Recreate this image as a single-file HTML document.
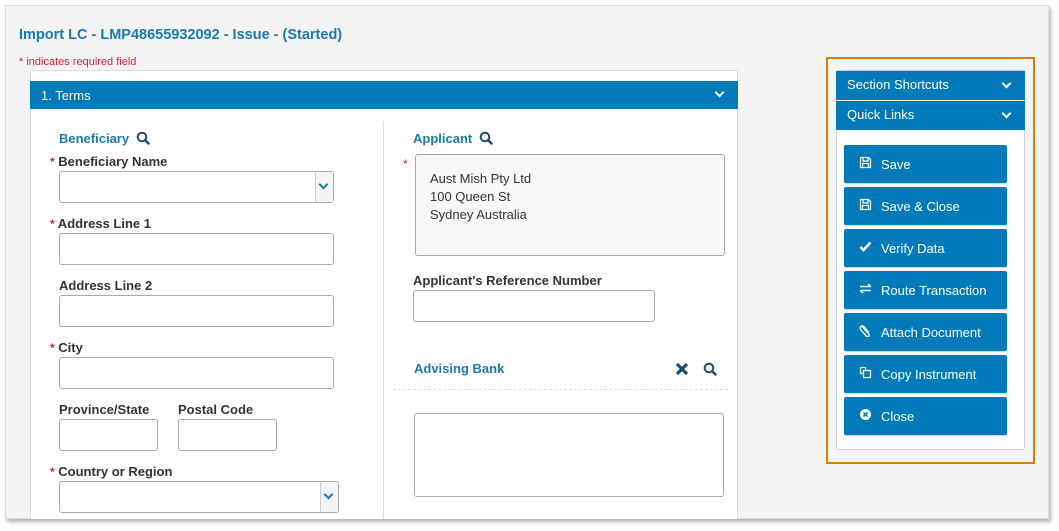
<!DOCTYPE html>
<html><head><style>
*{box-sizing:border-box;margin:0;padding:0}
body{width:1059px;height:531px;background:#fff;font-family:"Liberation Sans",sans-serif;position:relative;overflow:hidden;color:#333}
.a{position:absolute}
.page{left:5px;top:5px;width:1044px;height:514px;background:#f4f4f4;border:1px solid #ddd;box-shadow:2px 3px 4px rgba(0,0,0,.3)}
.title{left:19px;top:27px;font-size:14.5px;font-weight:bold;color:#1a7ab0}
.req{left:19px;top:56px;font-size:11px;color:#d0213a}
.form{left:30px;top:70px;width:708px;height:449px;background:#fff;border:1px solid #ddd;border-bottom:none}
.hdr{background:#007ab8;color:#fff;font-size:13px}
.lbl{font-size:13px;font-weight:bold;color:#333}
.blue{font-size:13px;color:#1a7ab0;font-weight:bold}
.in{border:1px solid #aaa;border-radius:3px;background:#fff}
.star{color:#d0213a;font-size:12px}
.sel::after{content:"";position:absolute;right:0;top:0;bottom:0;width:17px;border-left:1px solid #ccc;background:#f4f4f4}
.chev{position:absolute;width:7px;height:7px;border-right:2px solid;border-bottom:2px solid;transform:rotate(45deg)}
.btn{left:844px;width:163px;height:38px;background:#007ab8;color:#fff;font-size:13px;border-radius:2px;padding:12px 0 0 37px;box-shadow:0 1px 1px #ccc}
.ic{position:absolute;left:15px;top:11px;font-size:14px;line-height:14px}
.ic svg{display:block}
</style></head><body>
<div class="a page"></div>
<div class="a title">Import LC - LMP48655932092 - Issue - (Started)</div>
<div class="a req">* indicates required field</div>
<div class="a form"></div>
<div class="a hdr" style="left:30px;top:81px;width:708px;height:28px;padding:7px 0 0 11px">1. Terms<span class="chev" style="left:686px;top:8px;color:#fff"></span></div>
<div class="a" style="left:383px;top:121px;width:1px;height:398px;background:#ddd"></div>

<div class="a blue" style="left:59px;top:131px">Beneficiary</div>
<svg class="a" style="left:136px;top:131px" width="14" height="14" viewBox="0 0 14 14"><circle cx="6" cy="6" r="4.3" fill="none" stroke="#1d4e6e" stroke-width="2"/><path d="M9 9l3.5 3.5" stroke="#1d4e6e" stroke-width="2.4" stroke-linecap="round"/></svg>
<div class="a lbl" style="left:50px;top:154px"><span class="star">*</span> Beneficiary Name</div>
<div class="a in sel" style="left:59px;top:171px;width:275px;height:32px"></div><span class="chev" style="left:320px;top:181px;color:#1a7ab0;position:absolute;z-index:2"></span>
<div class="a lbl" style="left:50px;top:216px"><span class="star">*</span> Address Line 1</div>
<div class="a in" style="left:59px;top:233px;width:275px;height:32px"></div>
<div class="a lbl" style="left:59px;top:278px">Address Line 2</div>
<div class="a in" style="left:59px;top:295px;width:275px;height:32px"></div>
<div class="a lbl" style="left:50px;top:340px"><span class="star">*</span> City</div>
<div class="a in" style="left:59px;top:357px;width:275px;height:32px"></div>
<div class="a lbl" style="left:59px;top:402px">Province/State</div>
<div class="a lbl" style="left:178px;top:402px">Postal Code</div>
<div class="a in" style="left:59px;top:419px;width:99px;height:32px"></div>
<div class="a in" style="left:178px;top:419px;width:99px;height:32px"></div>
<div class="a lbl" style="left:50px;top:464px"><span class="star">*</span> Country or Region</div>
<div class="a in sel" style="left:59px;top:481px;width:280px;height:32px"></div><span class="chev" style="left:325px;top:491px;color:#1a7ab0;position:absolute;z-index:2"></span>

<div class="a blue" style="left:413px;top:131px">Applicant</div>
<svg class="a" style="left:479px;top:131px" width="14" height="14" viewBox="0 0 14 14"><circle cx="6" cy="6" r="4.3" fill="none" stroke="#1d4e6e" stroke-width="2"/><path d="M9 9l3.5 3.5" stroke="#1d4e6e" stroke-width="2.4" stroke-linecap="round"/></svg>
<div class="a star" style="left:403px;top:157px">*</div>
<div class="a in" style="left:415px;top:154px;width:310px;height:102px;background:#f8f8f8;font-size:13px;line-height:18px;padding:15px 14px;color:#333">Aust Mish Pty Ltd<br>100 Queen St<br>Sydney Australia</div>
<div class="a lbl" style="left:413px;top:273px">Applicant's Reference Number</div>
<div class="a in" style="left:413px;top:290px;width:242px;height:32px"></div>
<div class="a blue" style="left:414px;top:361px">Advising Bank</div>
<svg class="a" style="left:675px;top:362px" width="14" height="14" viewBox="0 0 14 14"><path d="M2 2l10 10M12 2L2 12" stroke="#1d4e6e" stroke-width="3.2"/></svg>
<svg class="a" style="left:703px;top:362px" width="14" height="14" viewBox="0 0 14 14"><circle cx="6" cy="6" r="4.3" fill="none" stroke="#1d4e6e" stroke-width="2"/><path d="M9 9l3.5 3.5" stroke="#1d4e6e" stroke-width="2.4" stroke-linecap="round"/></svg>
<div class="a" style="left:393px;top:389px;width:335px;border-top:1px dashed #ddd"></div>
<div class="a in" style="left:414px;top:413px;width:310px;height:84px"></div>

<div class="a" style="left:826px;top:57px;width:209px;height:407px;border:2px solid #e07b00"></div>
<div class="a" style="left:836px;top:70px;width:189px;height:380px;background:#fff;border:1px solid #ccc;border-radius:3px"></div>
<div class="a hdr" style="left:836px;top:71px;width:189px;height:29px;padding:6px 0 0 11px">Section Shortcuts<span class="chev" style="left:167px;top:9px;color:#fff"></span></div>
<div class="a hdr" style="left:836px;top:101px;width:189px;height:29px;padding:6px 0 0 11px">Quick Links<span class="chev" style="left:167px;top:9px;color:#fff"></span></div>
<div class="a btn" style="top:145px"><span class="ic"><svg width="13" height="13" viewBox="0 0 13 13"><path d="M1.5 1.5h8l2 2v8h-10z M4 1.5v3.5h5v-3.5 M3.5 11.5v-4h6v4" fill="none" stroke="#fff" stroke-width="1.2"/></svg></span>Save</div>
<div class="a btn" style="top:187px"><span class="ic"><svg width="13" height="13" viewBox="0 0 13 13"><path d="M1.5 1.5h8l2 2v8h-10z M4 1.5v3.5h5v-3.5 M3.5 11.5v-4h6v4" fill="none" stroke="#fff" stroke-width="1.2"/></svg></span>Save &amp; Close</div>
<div class="a btn" style="top:229px"><span class="ic"><svg width="13" height="13" viewBox="0 0 13 13"><path d="M1.5 7l3 3 7-7.5" fill="none" stroke="#fff" stroke-width="2.6"/></svg></span>Verify Data</div>
<div class="a btn" style="top:271px"><span class="ic"><svg width="13" height="13" viewBox="0 0 13 13"><path d="M1 4.5h11M9 2l3 2.5M12 8.5H1M4 11L1 8.5" fill="none" stroke="#fff" stroke-width="1.4"/></svg></span>Route Transaction</div>
<div class="a btn" style="top:313px"><span class="ic"><svg width="13" height="13" viewBox="0 0 13 13"><path d="M3 2.5l7 8a1.6 1.6 0 0 1-2.4 2l-6-7a2.2 2.2 0 0 1 3.2-3l5 6" fill="none" stroke="#fff" stroke-width="1.3"/></svg></span>Attach Document</div>
<div class="a btn" style="top:355px"><span class="ic"><svg width="13" height="13" viewBox="0 0 13 13"><path d="M1.5 1.5h5v2M1.5 1.5v6h3M4.5 4.5h7v7h-7z" fill="none" stroke="#fff" stroke-width="1.2"/></svg></span>Copy Instrument</div>
<div class="a btn" style="top:397px"><span class="ic"><svg width="13" height="13" viewBox="0 0 13 13"><circle cx="6.5" cy="6.5" r="5.5" fill="#fff"/><path d="M4.5 4.5l4 4M8.5 4.5l-4 4" stroke="#007ab8" stroke-width="1.6"/></svg></span>Close</div>
</body></html>
